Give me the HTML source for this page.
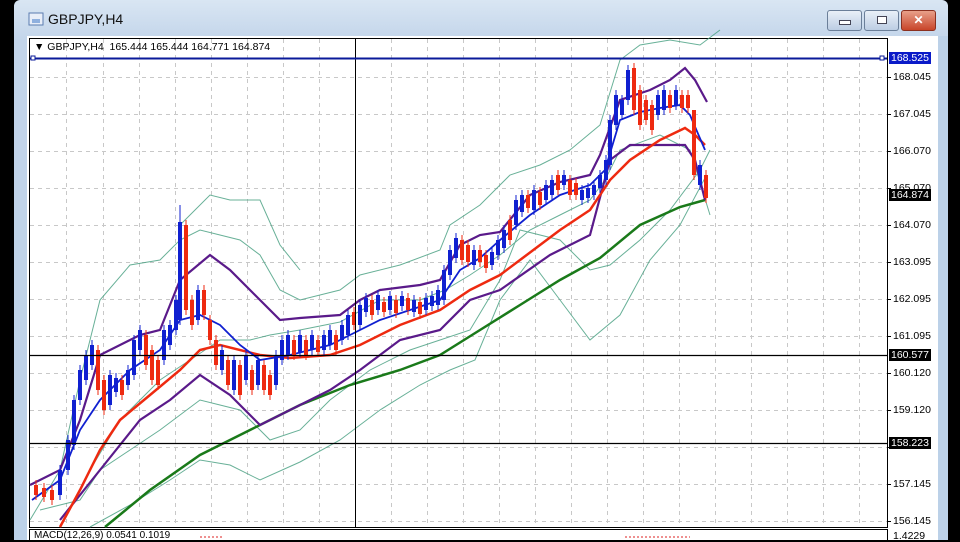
<!DOCTYPE html>
<html><head><meta charset="utf-8"><style>
html,body{margin:0;padding:0;width:960px;height:540px;overflow:hidden;background:#000;font-family:"Liberation Sans",sans-serif}
.win{position:absolute;left:14px;top:0;width:934px;height:540px;background:linear-gradient(#d9e6f3,#c3d5ea 40px,#bcd1e8);border-radius:6px 6px 0 0}
.title{position:absolute;left:34px;top:11px;font-size:14px;color:#111}
.btn{position:absolute;top:10px;height:19px;border-radius:3px;border:1px solid #6b7f99}
.client{position:absolute;left:27px;top:36px;width:911px;height:504px;background:#fff}
.ax{position:absolute;left:893px;font-size:10.5px;color:#000}
</style></head><body>
<div class="win">
 <svg style="position:absolute;left:14px;top:11px" width="16" height="16"><rect x="1" y="2" width="14" height="12" fill="#e8eef8" stroke="#5a7cb0"/><rect x="4" y="8" width="8" height="4" fill="#8fb0de"/></svg>
 <div class="title">GBPJPY,H4</div>
 <div class="btn" style="left:813px;width:33px;background:linear-gradient(#e9f0f8,#bccde3)"><div style="margin:9px auto 0;width:10px;height:3px;background:#fff;border:1px solid #445"></div></div>
 <div class="btn" style="left:850px;width:33px;background:linear-gradient(#e9f0f8,#bccde3)"><div style="margin:5px auto 0;width:8px;height:6px;background:#fff;border:1px solid #445"></div></div>
 <div class="btn" style="left:887px;width:33px;background:linear-gradient(#e8a08a,#c8452a);border-color:#8a3020;color:#fff;font-weight:bold;font-size:12px;text-align:center;line-height:19px">✕</div>
</div>
<div class="client"></div>
<svg style="position:absolute;left:0;top:0" width="960" height="540">
 <rect x="29.5" y="38.5" width="858" height="489" fill="#fff" stroke="#000"/>
 <g stroke="#c8c8c8" stroke-dasharray="4 4" stroke-width="1">
  <path d="M66.5 39V527M103.5 39V527M139.5 39V527M175.5 39V527M211.5 39V527M247.5 39V527M283.5 39V527M319.5 39V527M391.5 39V527M427.5 39V527M463.5 39V527M499.5 39V527M535.5 39V527M571.5 39V527M607.5 39V527M643.5 39V527M679.5 39V527M715.5 39V527M751.5 39V527M787.5 39V527M823.5 39V527M859.5 39V527"/>
  <path d="M30 77.5H887M30 114.5H887M30 151.5H887M30 188.5H887M30 225.5H887M30 262.5H887M30 299.5H887M30 336.5H887M30 373.5H887M30 410.5H887M30 447.5H887M30 484.5H887M30 521.5H887"/>
 </g>
 <g fill="none" stroke="#4ea386" stroke-width="1" opacity="0.85">
  <path d="M30 520 60 470 80 380 100 300 130 265 160 260 180 240 200 230 240 240 260 255 280 290 300 300 340 290 360 275 400 265 440 250 450 225 480 205 510 175 540 165 570 150 600 125 620 60 640 45 670 40 700 45 720 30"/>
  <path d="M60 527 90 470 120 420 160 380 190 360 220 340 250 340 270 335 300 330 340 322 380 300 420 300 445 290 470 275 500 255 530 230 560 215 590 200 605 180 620 150 660 135 690 150 710 215"/>
  <path d="M40 510 80 500 100 470 130 450 160 430 200 400 240 410 270 440 300 430 330 400 370 370 410 350 440 340 470 330 500 280 520 230 560 240 590 270 610 265 640 240 670 210 700 170 710 150"/>
  <path d="M90 527 130 505 170 480 200 460 230 465 260 480 300 462 340 440 380 410 420 385 450 370 475 360 500 300 530 260 560 300 590 340 620 315 650 260 680 225 705 178"/>
  <path d="M180 225 210 195 230 200 260 200 280 245 300 270"/>
 </g>
 <polyline fill="none" stroke="#1a7a1a" stroke-width="2.5" points="105,527 150,490 200,455 250,430 300,405 350,385 400,370 440,355 480,330 520,305 560,280 600,258 640,225 680,207 705,200"/>
 <polyline fill="none" stroke="#5a1a8a" stroke-width="2.2" points="30,485 60,470 80,420 100,355 140,335 160,330 180,280 210,255 230,270 260,300 280,320 300,318 340,315 360,300 380,290 420,285 440,280 460,245 480,235 500,232 530,195 560,182 590,175 600,155 620,100 650,90 670,80 685,68 695,80 707,102"/>
 <polyline fill="none" stroke="#5a1a8a" stroke-width="2.2" points="60,520 100,470 140,420 170,400 200,375 230,395 260,425 290,410 330,390 360,370 400,340 440,330 470,300 500,290 550,255 590,235 610,160 630,145 655,145 685,145 695,160 705,200"/>
 <polyline fill="none" stroke="#ee2a10" stroke-width="2.5" points="60,527 80,490 100,450 120,420 150,395 180,370 200,350 220,345 260,355 290,358 330,355 360,345 400,325 440,310 470,290 500,275 520,260 560,230 590,210 610,180 630,160 660,140 685,128 695,135 705,145"/>
 <polyline fill="none" stroke="#1020d0" stroke-width="1.8" points="32,500 60,480 80,430 100,400 130,370 160,350 180,320 200,315 220,325 240,345 260,360 290,355 330,345 350,335 380,320 410,310 440,300 460,270 480,258 500,240 530,215 560,195 590,185 605,170 620,120 640,112 660,108 680,105 690,115 705,150"/>
 <g>
 <path stroke="#1020d0" d="M60 465V500M68 435V475M74 395V450M80 365V405M86 350V385M92 340V370M110 370V410M116 373V397M128 365V390M134 335V380M140 325V355M164 325V365M170 320V350M176 295V335M180 205V325M198 285V325M222 345V375M234 355V395M246 350V385M258 355V390M276 350V390M282 335V365M288 330V360M300 330V357M312 330V355M324 330V355M330 325V350M342 320V345M348 310V340M360 300V330M366 293V317M378 290V315M390 291V315M402 291V311M414 295V317M426 293V315M432 291V311M438 285V310M444 265V305M450 245V280M456 233V263M474 245V270M492 247V270M498 235V260M504 225V253M516 195V230M522 190V217M534 185V215M546 180V205M552 175V200M564 170V190M582 185V205M588 183V203M594 180V200M600 170V193M606 155V185M610 115V170M616 90V130M622 95V120M628 65V105M658 90V120M664 85V115M676 85V110M700 160V190"/>
 <path stroke="#ee2a10" d="M36 480V500M44 483V502M52 485V505M98 345V395M104 375V415M122 375V400M146 330V370M152 345V385M158 355V390M186 220V315M192 295V330M204 285V320M210 315V345M216 335V370M228 355V390M240 360V400M252 365V395M264 360V395M270 370V400M294 335V360M306 335V360M318 335V357M336 330V355M354 307V330M372 295V320M384 297V317M396 295V318M408 293V315M420 297V319M462 235V265M468 240V267M480 245V267M486 250V273M510 215V245M528 190V213M540 187V210M558 170V195M570 175V200M576 178V200M634 63V115M640 85V130M646 95V125M652 100V135M670 90V113M682 90V113M688 90V113M694 145V180M706 170V203"/>
 <g fill="#1020d0"><rect x="58" y="470" width="4" height="25"/><rect x="66" y="440" width="4" height="30"/><rect x="72" y="400" width="4" height="45"/><rect x="78" y="370" width="4" height="30"/><rect x="84" y="355" width="4" height="25"/><rect x="90" y="345" width="4" height="20"/><rect x="108" y="375" width="4" height="30"/><rect x="114" y="378" width="4" height="14"/><rect x="126" y="370" width="4" height="15"/><rect x="132" y="340" width="4" height="35"/><rect x="138" y="330" width="4" height="20"/><rect x="162" y="330" width="4" height="30"/><rect x="168" y="325" width="4" height="20"/><rect x="174" y="300" width="4" height="30"/><rect x="178" y="222" width="4" height="98"/><rect x="196" y="290" width="4" height="30"/><rect x="220" y="350" width="4" height="20"/><rect x="232" y="360" width="4" height="30"/><rect x="244" y="355" width="4" height="25"/><rect x="256" y="360" width="4" height="25"/><rect x="274" y="355" width="4" height="30"/><rect x="280" y="340" width="4" height="20"/><rect x="286" y="335" width="4" height="20"/><rect x="298" y="335" width="4" height="17"/><rect x="310" y="335" width="4" height="15"/><rect x="322" y="335" width="4" height="15"/><rect x="328" y="330" width="4" height="15"/><rect x="340" y="325" width="4" height="15"/><rect x="346" y="315" width="4" height="20"/><rect x="358" y="305" width="4" height="20"/><rect x="364" y="298" width="4" height="14"/><rect x="376" y="295" width="4" height="15"/><rect x="388" y="296" width="4" height="14"/><rect x="400" y="296" width="4" height="10"/><rect x="412" y="300" width="4" height="12"/><rect x="424" y="298" width="4" height="12"/><rect x="430" y="296" width="4" height="10"/><rect x="436" y="290" width="4" height="15"/><rect x="442" y="270" width="4" height="30"/><rect x="448" y="250" width="4" height="25"/><rect x="454" y="238" width="4" height="20"/><rect x="472" y="250" width="4" height="15"/><rect x="490" y="252" width="4" height="13"/><rect x="496" y="240" width="4" height="15"/><rect x="502" y="230" width="4" height="18"/><rect x="514" y="200" width="4" height="25"/><rect x="520" y="195" width="4" height="17"/><rect x="532" y="190" width="4" height="20"/><rect x="544" y="185" width="4" height="15"/><rect x="550" y="180" width="4" height="15"/><rect x="562" y="175" width="4" height="10"/><rect x="580" y="190" width="4" height="10"/><rect x="586" y="188" width="4" height="10"/><rect x="592" y="185" width="4" height="10"/><rect x="598" y="175" width="4" height="13"/><rect x="604" y="160" width="4" height="20"/><rect x="608" y="120" width="4" height="45"/><rect x="614" y="95" width="4" height="30"/><rect x="620" y="100" width="4" height="15"/><rect x="626" y="70" width="4" height="30"/><rect x="656" y="95" width="4" height="20"/><rect x="662" y="90" width="4" height="20"/><rect x="674" y="90" width="4" height="15"/><rect x="698" y="165" width="4" height="20"/></g>
 <g fill="#ee2a10"><rect x="34" y="485" width="4" height="10"/><rect x="42" y="488" width="4" height="9"/><rect x="50" y="490" width="4" height="10"/><rect x="96" y="350" width="4" height="40"/><rect x="102" y="380" width="4" height="30"/><rect x="120" y="380" width="4" height="15"/><rect x="144" y="335" width="4" height="30"/><rect x="150" y="350" width="4" height="30"/><rect x="156" y="360" width="4" height="25"/><rect x="184" y="225" width="4" height="85"/><rect x="190" y="300" width="4" height="25"/><rect x="202" y="290" width="4" height="25"/><rect x="208" y="320" width="4" height="20"/><rect x="214" y="340" width="4" height="25"/><rect x="226" y="360" width="4" height="25"/><rect x="238" y="365" width="4" height="30"/><rect x="250" y="370" width="4" height="20"/><rect x="262" y="365" width="4" height="25"/><rect x="268" y="375" width="4" height="20"/><rect x="292" y="340" width="4" height="15"/><rect x="304" y="340" width="4" height="15"/><rect x="316" y="340" width="4" height="12"/><rect x="334" y="335" width="4" height="15"/><rect x="352" y="312" width="4" height="13"/><rect x="370" y="300" width="4" height="15"/><rect x="382" y="302" width="4" height="10"/><rect x="394" y="300" width="4" height="13"/><rect x="406" y="298" width="4" height="12"/><rect x="418" y="302" width="4" height="12"/><rect x="460" y="240" width="4" height="20"/><rect x="466" y="245" width="4" height="17"/><rect x="478" y="250" width="4" height="12"/><rect x="484" y="255" width="4" height="13"/><rect x="508" y="220" width="4" height="20"/><rect x="526" y="195" width="4" height="13"/><rect x="538" y="192" width="4" height="13"/><rect x="556" y="175" width="4" height="15"/><rect x="568" y="180" width="4" height="15"/><rect x="574" y="183" width="4" height="12"/><rect x="632" y="68" width="4" height="42"/><rect x="638" y="90" width="4" height="35"/><rect x="644" y="100" width="4" height="20"/><rect x="650" y="105" width="4" height="25"/><rect x="668" y="95" width="4" height="13"/><rect x="680" y="95" width="4" height="13"/><rect x="686" y="95" width="4" height="13"/><rect x="692" y="110" width="4" height="65"/><rect x="704" y="175" width="4" height="23"/></g>
 </g>
 <path d="M355.5 39V527" stroke="#000"/>
 <path d="M30 355.5H887M30 443.5H887" stroke="#000" stroke-width="1.2"/>
 <path d="M30 58.5H887" stroke="#0a1a9a" stroke-width="2"/>
 <rect x="31" y="56" width="4" height="4" fill="#fff" stroke="#0a1a9a"/>
 <rect x="880" y="56" width="4" height="4" fill="#fff" stroke="#0a1a9a"/>
 <rect x="29.5" y="529.5" width="858" height="12" fill="#fff" stroke="#000"/>
 <path d="M625 537H690M200 537H222" stroke="#d22" stroke-dasharray="2 2"/>
 <g stroke="#000"><path d="M887 77.5h4M887 114.5h4M887 151.5h4M887 188.5h4M887 225.5h4M887 262.5h4M887 299.5h4M887 336.5h4M887 373.5h4M887 410.5h4M887 447.5h4M887 484.5h4M887 521.5h4"/></g>
 <rect x="938" y="36" width="10" height="504" fill="#bcd1e8"/>
</svg>
<div style="position:absolute;left:34px;top:41px;font-size:10.5px;color:#000">▼ GBPJPY,H4&nbsp; 165.444 165.444 164.771 164.874</div>
<div style="position:absolute;left:34px;top:530px;font-size:10px;color:#000">MACD(12,26,9) 0.0541 0.1019</div>
<div class="ax" style="top:71px">168.045</div>
<div class="ax" style="top:108px">167.045</div>
<div class="ax" style="top:145px">166.070</div>
<div class="ax" style="top:182px">165.070</div>
<div class="ax" style="top:219px">164.070</div>
<div class="ax" style="top:256px">163.095</div>
<div class="ax" style="top:293px">162.095</div>
<div class="ax" style="top:330px">161.095</div>
<div class="ax" style="top:367px">160.120</div>
<div class="ax" style="top:404px">159.120</div>
<div class="ax" style="top:478px">157.145</div>
<div class="ax" style="top:515px">156.145</div>
<div class="ax" style="top:530px">1.4229</div>
<div class="ax" style="left:889px;top:52px;background:#0a1ac8;color:#fff;padding:0 2px">168.525</div>
<div class="ax" style="left:889px;top:189px;background:#000;color:#fff;padding:0 2px">164.874</div>
<div class="ax" style="left:889px;top:349px;background:#000;color:#fff;padding:0 2px">160.577</div>
<div class="ax" style="left:889px;top:437px;background:#000;color:#fff;padding:0 2px">158.223</div>
</body></html>
